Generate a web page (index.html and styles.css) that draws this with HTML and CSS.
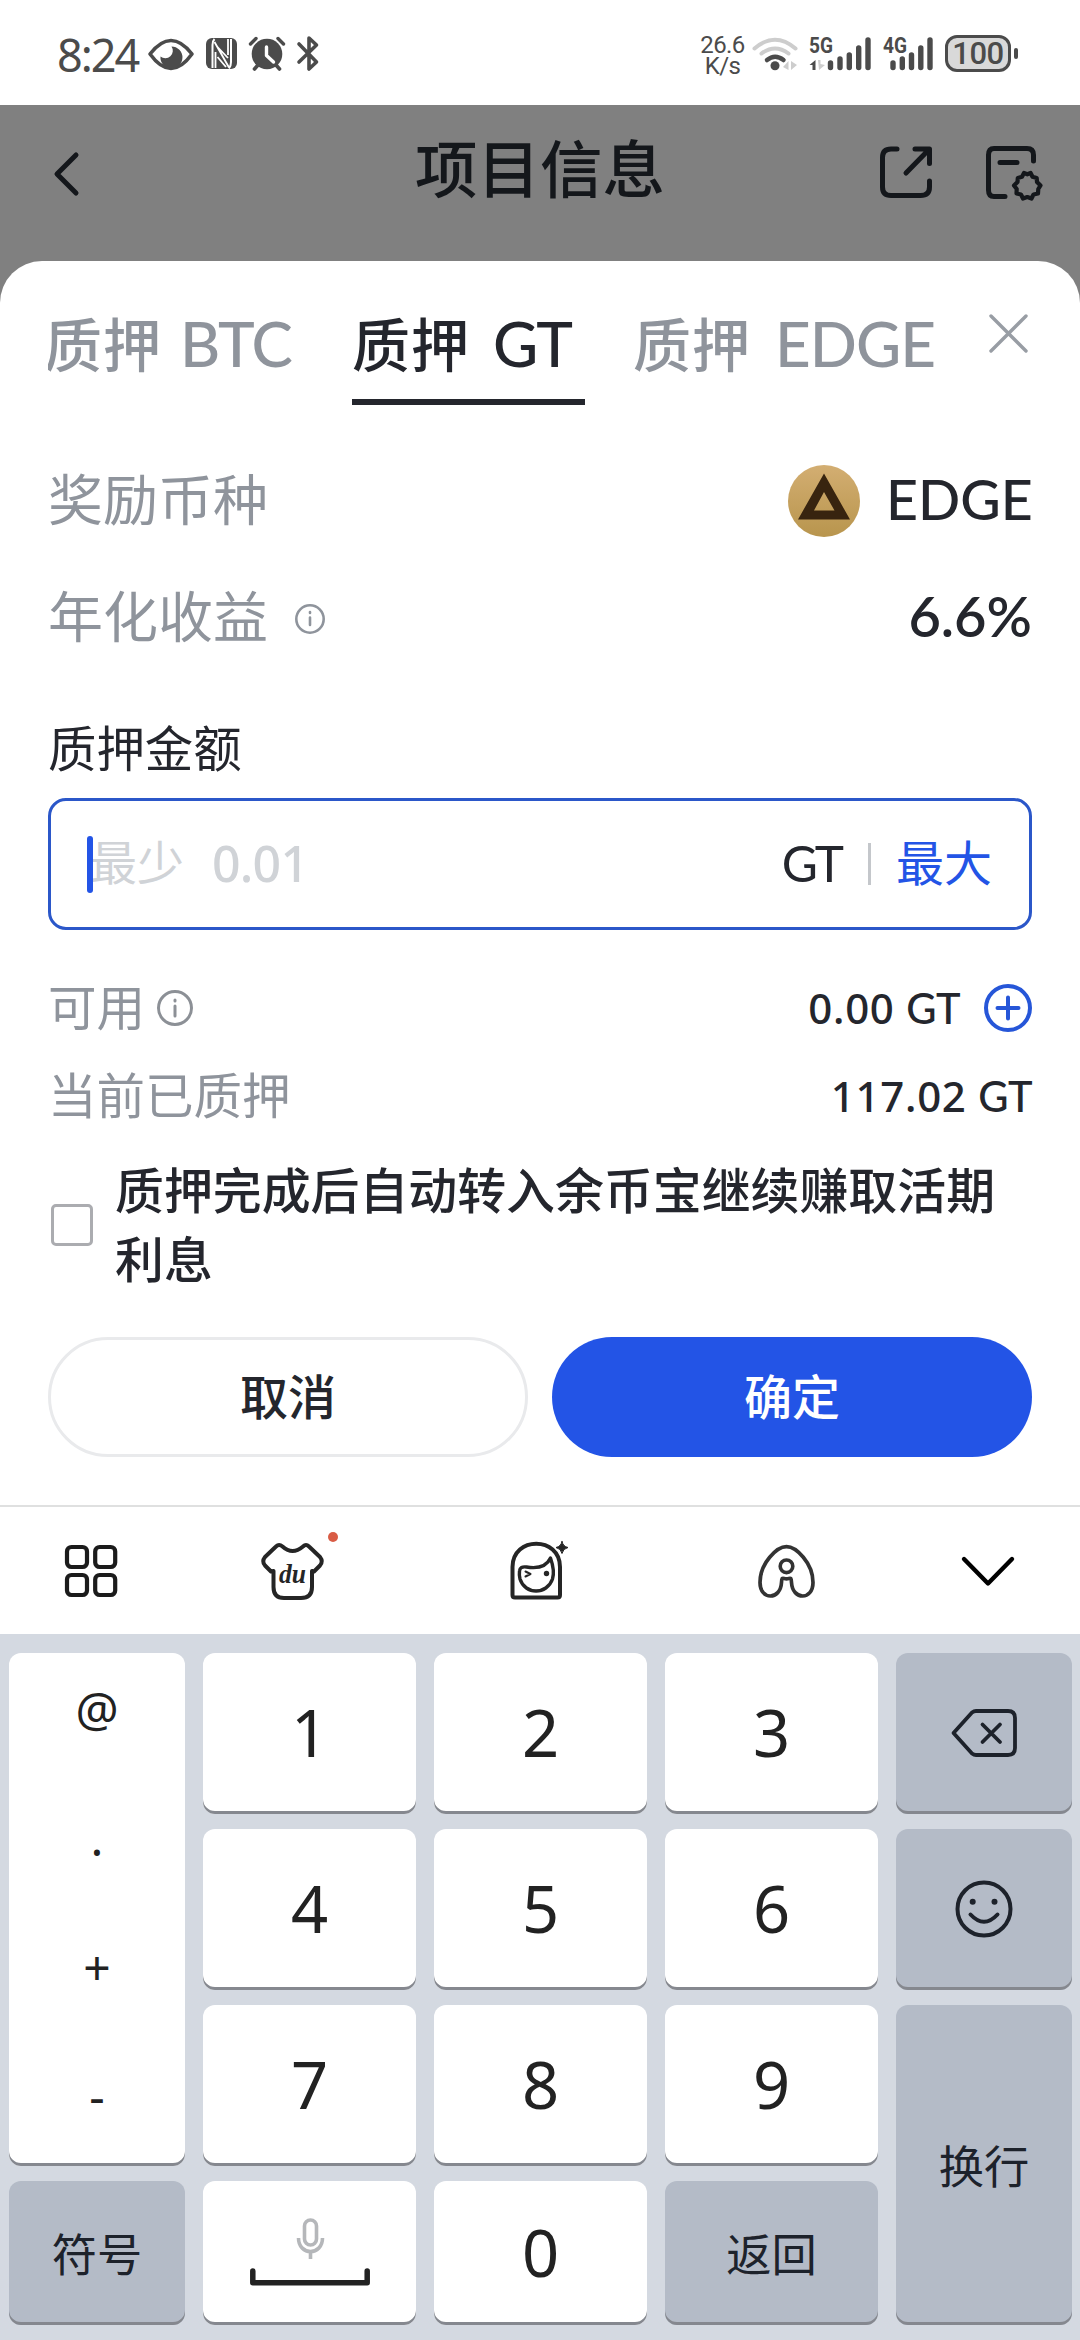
FILE: index.html
```html
<!DOCTYPE html>
<html lang="zh-CN">
<head>
<meta charset="utf-8">
<title>项目信息</title>
<link rel="stylesheet" href="styles.css">
</head>
<body>
<div class="screen">
  <header class="status">
    <span class="clock">8:24</span>
    <svg class="status-left" width="172" height="37" viewBox="148 35 172 37" fill="none" stroke="#4b4b4b" stroke-linecap="round" stroke-linejoin="round">
      <path d="M150 54Q171 27 192 54Q171 83 150 54Z" stroke-width="3.6"/>
      <path d="M171.500 46.500A11 11 0 1 1 160.500 56.500A7.500 7.500 0 0 0 171.500 46.500Z" fill="#4b4b4b" stroke="none"/>
      <rect x="206" y="38" width="31" height="31" rx="6" fill="#4b4b4b" stroke="none"/>
      <path d="M214.500 39Q212.500 41 212.500 45V68M229 68.500Q231 66 231 62V39" stroke="#fff" stroke-width="2" stroke-linecap="butt"/>
      <path d="M214.500 42L229 67.500M215.500 52V68M228 39V55M217.500 47L228 58M217.500 57L226 67" stroke="#fff" stroke-width="1.800" stroke-linecap="butt"/>
      <circle cx="267" cy="54" r="15.300" fill="#4b4b4b" stroke="none"/>
      <path d="M250.500 44L256 38.500M283.500 44L278 38.500" stroke-width="3.400"/>
      <path d="M258 65L254.500 69M276 65L279.500 69" stroke-width="3.600"/>
      <path d="M266.500 47V55.500L273.500 62" stroke="#fff" stroke-width="3.400"/>
      <path d="M299 44L316.500 62L309 69V38L316.500 45L299 62" stroke-width="3.600"/>
    </svg>
    <div class="speed"><span>26.6</span><span>K/s</span></div>
    <svg class="status-right" width="188" height="37" viewBox="752 36 188 37" fill="none" stroke-linecap="round">
      <path d="M754.500 48.500Q775 31 795.500 48.500" stroke="#cdcdcd" stroke-width="4"/>
      <path d="M761.500 53.500Q775 43.500 788.500 53.500" stroke="#cdcdcd" stroke-width="4"/>
      <path d="M767 60Q775 53.500 783.500 60" stroke="#4b4b4b" stroke-width="4.500"/>
      <circle cx="775" cy="65.800" r="4.500" fill="#4b4b4b"/>
      <path d="M788.500 61V70L783 67Z M791 61V70L797 65Z" fill="#cdcdcd"/>
      <path d="M815.500 60V70H812.500V65H809.500Z" fill="#4b4b4b"/>
      <path d="M818 60H820.500V64L825 65L819 70Z" fill="#cdcdcd"/>
      <g stroke="#4b4b4b" stroke-width="5.400">
        <path d="M830.500 63V67.500M840 59V67.500M849.300 55V67.500M858.700 48V67.500M868 40V67.500"/>
        <path d="M893 63V67.500M902.300 59V67.500M911.500 55V67.500M920.800 48V67.500M930 40V67.500"/>
      </g>
      <text class="net" x="809" y="53" textLength="24" lengthAdjust="spacingAndGlyphs">5G</text>
      <text class="net" x="883" y="53" textLength="24" lengthAdjust="spacingAndGlyphs">4G</text>
    </svg>
    <div class="battery"><span>100</span></div><i class="nub"></i>
  </header>

  <nav class="header">
    <svg class="back" width="28" height="48" viewBox="52 150 28 48"><path d="M76 155L57 174L76 193" fill="none" stroke="#14171b" stroke-width="5" stroke-linecap="round" stroke-linejoin="round"/></svg>
    <h1>项目信息</h1>
    <svg class="tools" width="168" height="58" viewBox="878 145 168 58" fill="none" stroke="#14171b" stroke-width="5" stroke-linecap="round" stroke-linejoin="round">
      <path d="M897 149H891Q882.500 149 882.500 157.500V187Q882.500 195.500 891 195.500H920.500Q929.500 195.500 929.500 187V181M915 149H929.500V163.500M929 149.500L906 173"/>
      <path d="M1033.500 161V155Q1033.500 148.500 1027 148.500H994Q988.500 148.500 988.500 155V190Q988.500 196.500 994 196.500H1005M1000 162.500H1017"/>
      <path d="M1024 173L1027.300 174.300L1030.600 173L1032.500 176.800L1036.700 178L1037 182L1040.500 185.500L1038.300 189L1038 193.500L1033.500 194.500L1031.500 198.500L1027.300 197L1023 198.500L1021 194.500L1016.500 193.500L1016.700 189L1014 185.500L1017.500 182L1017.800 178L1022 176.800Z" stroke-width="4.200"/>
    </svg>
  </nav>

  <main class="sheet">
    <div class="tabs">
      <div class="tab tab-btc">质押 <b>BTC</b></div>
      <div class="tab tab-gt active">质押 <b>GT</b></div>
      <div class="tab tab-edge">质押 <b>EDGE</b></div>
      <svg class="close" width="41" height="41" viewBox="0 0 41 41"><path d="M3 3L38 38M38 3L3 38" stroke="#989da4" stroke-width="3.400" stroke-linecap="round"/></svg>
    </div>
    <div class="row reward">
      <span class="label">奖励币种</span>
      <span class="coin"><svg width="72" height="72" viewBox="0 0 72 72">
        <defs><linearGradient id="gold" x1="0" y1="0" x2="0" y2="1"><stop offset="0" stop-color="#d3ae72"/><stop offset="1" stop-color="#b8954d"/></linearGradient></defs>
        <circle cx="36" cy="36" r="36" fill="url(#gold)"/><path fill-rule="evenodd" d="M36 8.500L62 54.500H10ZM36 27L26 45.500H46.500Z" fill="#38240f"/></svg></span>
      <span class="value edge">EDGE</span>
    </div>
    <div class="row apy">
      <span class="label">年化收益</span>
      <svg class="info-s" width="32" height="32" viewBox="0 0 32 32" fill="none" stroke="#8f949c" stroke-width="2.600"><circle cx="16" cy="16" r="13.700"/><path d="M16 14.500V22M16 9V10" stroke-linecap="round"/></svg>
      <span class="value pct">6.6%</span>
    </div>
    <div class="field-label">质押金额</div>
    <div class="field">
      <i class="caret"></i><span class="hint">最少</span><span class="hint-num">0.01</span>
      <span class="unit">GT</span><i class="sep"></i><span class="max">最大</span>
    </div>
    <div class="row small avail">
      <span class="label">可用</span>
      <svg class="info-m" width="38" height="38" viewBox="0 0 38 38" fill="none" stroke="#8c9096" stroke-width="3"><circle cx="19" cy="19" r="16.500"/><path d="M19 17V27M19 11V12" stroke-linecap="round"/></svg>
      <span class="value amt">0.00 <b>GT</b></span>
      <svg width="48" height="48" viewBox="0 0 48 48" fill="none" stroke="#2656d8" stroke-width="4"><circle cx="24" cy="24" r="22"/><path d="M24 13.500V34.500M13.500 24H34.500" stroke-linecap="round"/></svg>
    </div>
    <div class="row small staked">
      <span class="label">当前已质押</span>
      <span class="value total">117.02 <b>GT</b></span>
    </div>
    <div class="agree"><i class="box"></i><p>质押完成后自动转入余币宝继续赚取活期利息</p></div>
    <div class="actions"><button class="btn cancel">取消</button><button class="btn ok">确定</button></div>
  </main>

  <section class="kb-bar">
    <svg width="1080" height="127" viewBox="0 1507 1080 127" fill="none" stroke="#252525" stroke-width="4" stroke-linecap="round" stroke-linejoin="round">
      <g stroke="#1b1b1b" stroke-width="4.200"><rect x="67" y="1547" width="20" height="20" rx="4.500"/><rect x="95.200" y="1547" width="20" height="20" rx="4.500"/><rect x="67" y="1575" width="20" height="20" rx="4.500"/><rect x="95.200" y="1575" width="20" height="20" rx="4.500"/></g>
      <path d="M273.500 1571V1587Q273.500 1598 284 1598H301Q312 1598 312 1587V1571M273.500 1571L271 1571.500L265 1565.500Q261.500 1561.500 265 1557L276 1546.500Q279 1543.500 282.500 1546.500Q292.500 1555.500 303 1546.500Q306 1543.500 309 1546.500L320 1557Q323.500 1561.500 320 1565.500L314 1571.500L312 1571"/>
      <text class="du" x="279" y="1583" textLength="27" lengthAdjust="spacingAndGlyphs">du</text>
      <circle cx="333" cy="1537" r="5" fill="#d95c45" stroke="none"/>
      <path d="M512.500 1595V1567C512.500 1536 560 1536 560 1567V1595Q560 1597.500 557.500 1597.500H515Q512.500 1597.500 512.500 1595Z"/>
      <path d="M519.500 1571Q520 1566 526.500 1567Q545 1570 550.500 1558Q555 1571 552.500 1579C547 1595 525 1595 520 1579Q519 1575 519.500 1571Z" stroke-width="3.400"/>
      <path d="M525.500 1571.500L530.500 1574L525.500 1576.500" stroke-width="2"/><circle cx="546.500" cy="1573.500" r="2.700" fill="#252525" stroke="none"/>
      <path d="M562 1541.500Q563 1546.500 568 1547.500Q563 1548.500 562 1553.500Q561 1548.500 556 1547.500Q561 1546.500 562 1541.500Z" fill="#252525" stroke-width="1"/>
      <path d="M786.500 1546.700C796 1546.700 813 1563 813 1582.500C813 1600.500 792.500 1600.500 791.500 1582.500C791.300 1576 790 1578.800 786.500 1578.800C783 1578.800 781.700 1576 781.500 1582.500C780.500 1600.500 760 1600.500 760 1582.500C760 1563 777 1546.700 786.500 1546.700Z" stroke="#333" stroke-width="3.700"/><circle cx="786.500" cy="1566.300" r="6.300" stroke="#333" stroke-width="3.600"/>
      <path d="M964 1559L988 1583.500L1012 1559" stroke="#000" stroke-width="4.400"/>
    </svg>
  </section>
  <section class="keys">
    <div class="key syms"><span>@</span><span>.</span><span>+</span><span>-</span></div>
    <div class="key"><span>1</span></div><div class="key"><span>2</span></div><div class="key"><span>3</span></div>
    <div class="key gray"><svg width="68" height="50" viewBox="950 1708 68 50" fill="none" stroke="#1d222b" stroke-width="3.800" stroke-linecap="round" stroke-linejoin="round"><path d="M953.500 1733L972 1712.500Q974 1711 976 1711H1008Q1015 1711 1015 1718V1748Q1015 1755 1008 1755H976Q974 1755 972 1753.500ZM982.500 1724.500L1000 1742M1000 1724.500L982.500 1742"/></svg></div>
    <div class="key"><span>4</span></div><div class="key"><span>5</span></div><div class="key"><span>6</span></div>
    <div class="key gray"><svg width="58" height="58" viewBox="0 0 58 58" fill="none" stroke="#1d222b" stroke-width="4" stroke-linecap="round"><circle cx="29" cy="29" r="26.500"/><path d="M15.500 34.500Q29 49 42.500 34.500"/><circle cx="17.700" cy="21.700" r="3" fill="#1d222b" stroke="none"/><circle cx="39.500" cy="21.700" r="3" fill="#1d222b" stroke="none"/></svg></div>
    <div class="key"><span>7</span></div><div class="key"><span>8</span></div><div class="key"><span>9</span></div>
    <div class="key gray enter word">换行</div>
    <div class="key gray word">符号</div>
    <div class="key"><svg width="122" height="70" viewBox="248 2218 122 70" fill="none" stroke-linecap="round" stroke-linejoin="round"><g stroke="#b5b7ba" stroke-width="3.600"><rect x="303.500" y="2221" width="12" height="25" rx="6"/><path d="M297.500 2239C297.500 2257 321.500 2257 321.500 2239M309.500 2252V2260" stroke-linecap="butt"/></g><path d="M251.800 2272V2283.700H366.200V2272" stroke="#222" stroke-width="5.500"/></svg></div>
    <div class="key"><span>0</span></div>
    <div class="key gray word">返回</div>
  </section>
</div>
</body>
</html>
```

FILE: styles.css
```css
* { box-sizing: border-box; }
body { margin: 0; background: #fff; font-family: "Noto Sans CJK SC", sans-serif; color: #24262d; }
svg { display: block; flex: none; overflow: visible; }
i { display: block; flex: none; }
.screen { width: 1080px; height: 2340px; display: flex; flex-direction: column; overflow: hidden; background: #808080; }

.status { height: 105px; background: #fff; display: flex; align-items: flex-start; padding: 35px 0 0 57px; color: #4b4b4b; flex: none; }
.clock { font: 400 45px/39px "Noto Sans", sans-serif; width: 91px; white-space: nowrap; letter-spacing: -2px; }
.speed { margin-left: 380px; width: 45px; display: flex; flex-direction: column; align-items: center; font: 400 24px/21px Roboto, sans-serif; letter-spacing: -0.6px; }
.status-right { margin: 1px 0 0 7px; }
.net { font: 700 22.500px Roboto, sans-serif; fill: #4b4b4b; }
.battery { margin-left: 5px; width: 66px; height: 37px; border: 3px solid #4b4b4b; border-radius: 12px; background: #d9d9d9; display: flex; align-items: center; justify-content: center; font: 500 31px/31px Roboto, sans-serif; letter-spacing: -0.5px; }
.nub { width: 4px; height: 11px; margin: 13px 0 0 3px; border-radius: 2px; background: #4b4b4b; }

.header { height: 156px; flex: none; display: flex; align-items: flex-start; padding-left: 52px; color: #14171b; }
.back { margin-top: 45px; }
.header h1 { margin: 16px 0 0 335px; width: 252px; font-size: 62.500px; line-height: 90px; font-weight: 500; white-space: nowrap; }
.tools { margin: 40px 0 0 211px; }

.sheet { height: 1244px; flex: none; background: #fff; border-radius: 42px 42px 0 0; padding: 0 48px; box-shadow: 0 42px 0 #fff; }
.tabs { display: flex; height: 144px; align-items: flex-start; padding-top: 39px; }
.tab { font-size: 58px; line-height: 84px; height: 105px; white-space: nowrap; color: #8f949c; overflow: hidden; font-weight: 500; flex: none; letter-spacing: 1px; }
.tab b { font-family: Lato, sans-serif; font-weight: 500; font-size: 62px; letter-spacing: -1px; margin-left: 10px; }
.tab-btc { width: 246px; margin-right: 58px; text-indent: -4px; }
.tab-btc b { letter-spacing: -1.500px; margin-left: 4px; }
.tab-gt { width: 233px; margin-right: 48px; }
.tab-gt b { margin-left: 9px; letter-spacing: -2px; }
.tab-edge { width: 304px; }
.active { color: #24262d; border-bottom: 6px solid #24262d; }
.close { margin: 13px 0 0 51px; }

.row { display: flex; align-items: center; }
.row .label { color: #8f949c; font-size: 55px; line-height: 80px; margin-top: -11px; }
.row .value { margin-left: auto; white-space: nowrap; }
.reward { margin-top: 56px; height: 80px; }
.coin { margin-left: auto; }
.reward .value { margin-left: 26px; }
.edge { font: 500 55.500px/72px Lato, sans-serif; width: 146px; margin-top: -5px; }
.apy { margin-top: 37px; height: 80px; }
.info-s { margin: 2px 0 0 26px; }
.pct { font: 600 56px/72px Lato, sans-serif; margin-top: -5px; }
.field-label { margin-top: 53px; font-size: 48.400px; line-height: 70px; height: 70px; }
.field { margin-top: 17px; height: 132px; border: 3px solid #2b57c9; border-radius: 18px; display: flex; align-items: center; padding: 0 37px 0 36px; font-size: 47px; line-height: 70px; }
.caret { width: 6px; height: 57px; border-radius: 3px; background: #2354e6; margin-right: -3px; z-index: 1; }
.hint { color: #d0d3d7; margin-top: -8px; }
.hint-num { margin: -3px 0 0 28px; font: 500 50px/70px "Noto Sans", sans-serif; color: #d0d3d7; letter-spacing: -0.8px; }
.unit { margin: -3px 0 0 auto; font: 400 49.500px/70px Lato, sans-serif; letter-spacing: -3px; }
.sep { width: 3px; height: 42px; background: #c4c7cb; margin: 0 25px 0 27px; }
.max { color: #2354e6; font-size: 48px; margin-top: -8px; }
.small .label { font-size: 48.500px; line-height: 70px; margin-top: -7px; }
.avail { margin-top: 43px; height: 70px; }
.info-m { margin-left: 11px; }
.row .amt { margin-right: 24px; }
.amt, .total { font: 500 42px/60px "Noto Sans", sans-serif; letter-spacing: 0.7px; }
.value b { font: 500 41.500px/60px Lato, sans-serif; letter-spacing: -0.5px; }
.staked { margin-top: 18px; height: 70px; }
.agree { margin-top: 25px; height: 138px; display: flex; align-items: center; }
.box { width: 42px; height: 42px; border: 3px solid #abacb0; border-radius: 5px; margin: 0 22px 0 3px; }
.agree p { margin: -7px 0 0; font-size: 48.900px; line-height: 69px; font-weight: 500; width: 900px; }
.actions { display: flex; gap: 24px; margin-top: 43px; }
.btn { flex: none; width: 480px; height: 120px; border-radius: 60px; font: 500 48px/70px "Noto Sans CJK SC", sans-serif; padding: 0 0 7px; color: #24262d; }
.cancel { background: #fff; border: 3px solid #e9eaec; }
.ok { background: #2354e6; border: 0; color: #fff; }

.kb-bar { height: 129px; flex: none; background: #fff; border-top: 2px solid #dfe0e0; }
.du { font: italic 700 28px "Liberation Serif", serif; fill: #252525; stroke: none; }
.keys { flex: 1; background: #d4d9e1; padding: 19px 8px 15px 9px; display: grid; grid-template-columns: 176px 213px 213px 213px 176px; grid-template-rows: 161px 161px 161px 144px; gap: 15px 18px; }
.key { background: #fff; border-radius: 12px; box-shadow: inset 0 -3px 0 #85888f; display: flex; align-items: center; justify-content: center; font: 400 65px/80px "Noto Sans", sans-serif; color: #222; padding-bottom: 3px; }
.gray { background: #b4bbc7; color: #1d222b; padding-bottom: 2px; }
.word { font: 400 45.300px/66px "Noto Sans CJK SC", sans-serif; }
.enter { grid-row: span 2; }
.syms { grid-row: span 3; flex-direction: column; justify-content: flex-start; padding-top: 26px; gap: 69px; font-size: 48px; line-height: 60px; }
```
